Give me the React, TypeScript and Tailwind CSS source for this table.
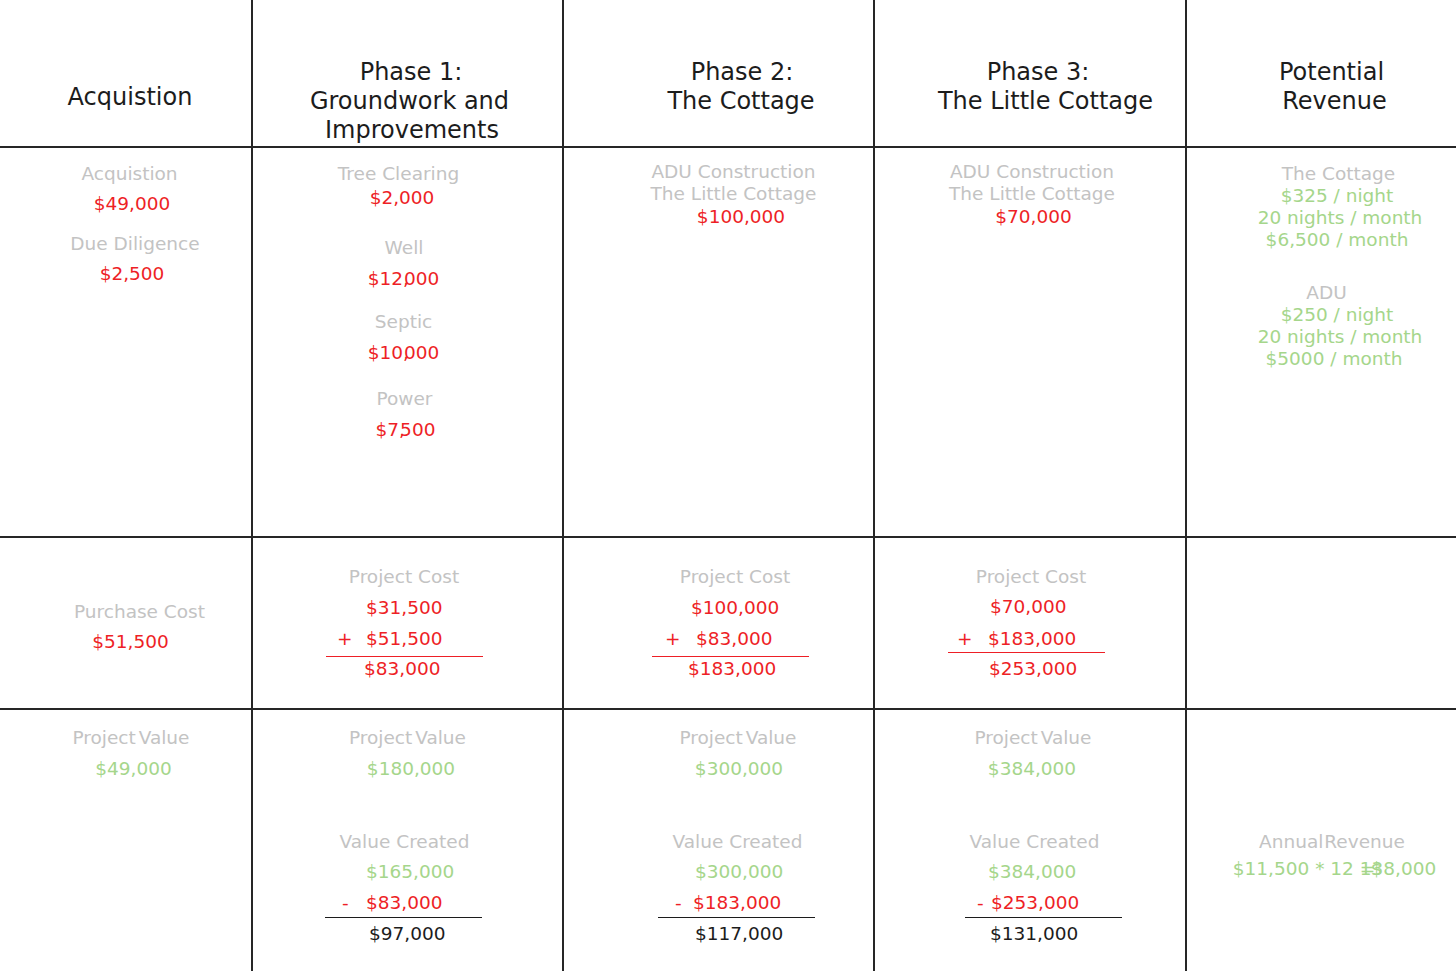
import type { ReactNode } from "react";

const gray = "text-[#c3c3c3]";
const red = "text-[#ee1f26]";
const green = "text-[#a5d68b]";
const dark = "text-[#1c1c1c]";

function T({ className = "", children }: { className?: string; children: ReactNode }) {
  return (
    <div className={`h-[22px] leading-[22px] text-center whitespace-nowrap ${className}`}>{children}</div>
  );
}

function H({ className = "", children }: { className?: string; children: ReactNode }) {
  return (
    <div className={`h-[29px] leading-[29px] text-center whitespace-nowrap ${className}`}>{children}</div>
  );
}

function Row({ className = "", children }: { className?: string; children: ReactNode }) {
  return (
    <div className={`grid grid-cols-[253px_311px_311px_312px_1fr] border-b-2 border-[#262626] ${className}`}>
      {children}
    </div>
  );
}

const cell = "border-r-2 border-[#262626] flex flex-col";

export default function App() {
  return (
    <div className="w-[1456px] h-[971px] overflow-hidden bg-white font-['DejaVu_Sans',sans-serif] text-[18.5px]">
      {/* header */}
      <Row className={`h-[148px] text-[24px] ${dark}`}>
        <div className={`${cell} pt-[83px]`}>
          <H className="pl-[9px]">Acquistion</H>
        </div>
        <div className={`${cell} pt-[58px]`}>
          <H className="pl-[7px]">Phase 1:</H>
          <H className="pl-[4px]">Groundwork and</H>
          <H className="pl-[9px]">Improvements</H>
        </div>
        <div className={`${cell} pt-[58px]`}>
          <H className="pl-[47px]">Phase 2:</H>
          <H className="pl-[45px]">The Cottage</H>
        </div>
        <div className={`${cell} pt-[58px]`}>
          <H className="pl-[16px]">Phase 3:</H>
          <H className="pl-[31px]">The Little Cottage</H>
        </div>
        <div className="flex flex-col pt-[58px]">
          <H className="pl-[20px]">Potential</H>
          <H className="pl-[26px]">Revenue</H>
        </div>
      </Row>

      {/* costs */}
      <Row className="h-[390px]">
        <div className={`${cell} pt-[15px]`}>
          <T className={`${gray} pl-[8px]`}>Acquistion</T>
          <T className={`${red} mt-[8px] pl-[13px]`}>$49,000</T>
          <T className={`${gray} mt-[18px] pl-[19px]`}>Due Diligence</T>
          <T className={`${red} mt-[8px] pl-[13px]`}>$2,500</T>
        </div>
        <div className={`${cell} pt-[15px]`}>
          <T className={`${gray} pr-[18px]`}>Tree Clearing</T>
          <T className={`${red} mt-[2px] pr-[11px]`}>$2,000</T>
          <T className={`${gray} mt-[28px] pr-[7px]`}>Well</T>
          <T className={`${red} mt-[9px] pr-[8px]`}>
            $12<span className="inline-block w-[1px]">,</span>000
          </T>
          <T className={`${gray} mt-[21px] pr-[8px]`}>Septic</T>
          <T className={`${red} mt-[9px] pr-[8px]`}>
            $10<span className="inline-block w-[1px]">,</span>000
          </T>
          <T className={`${gray} mt-[24px] pr-[6px]`}>Power</T>
          <T className={`${red} mt-[9px] pr-[4px]`}>
            $7<span className="inline-block w-[1px]">,</span>500
          </T>
        </div>
        <div className={`${cell} pt-[13px]`}>
          <T className={`${gray} pl-[30px]`}>ADU Construction</T>
          <T className={`${gray} pl-[30px]`}>The Little Cottage</T>
          <T className={`${red} mt-[1px] pl-[45px]`}>$100,000</T>
        </div>
        <div className={`${cell} pt-[13px]`}>
          <T className={`${gray} pl-[4px]`}>ADU Construction</T>
          <T className={`${gray} pl-[4px]`}>The Little Cottage</T>
          <T className={`${red} mt-[1px] pl-[7px]`}>$70,000</T>
        </div>
        <div className="flex flex-col pt-[15px]">
          <T className={`${gray} pl-[34px]`}>The Cottage</T>
          <T className={`${green} pl-[31px]`}>$325 / night</T>
          <T className={`${green} pl-[37px]`}>20 nights / month</T>
          <T className={`${green} pl-[31px]`}>$6,500 / month</T>
          <T className={`${gray} mt-[31px] pl-[10px]`}>ADU</T>
          <T className={`${green} pl-[31px]`}>$250 / night</T>
          <T className={`${green} pl-[37px]`}>20 nights / month</T>
          <T className={`${green} pl-[25px]`}>$5000 / month</T>
        </div>
      </Row>

      {/* project cost */}
      <Row className="h-[172px]">
        <div className={`${cell} pt-[63px]`}>
          <T className={`${gray} pl-[28px]`}>Purchase Cost</T>
          <T className={`${red} mt-[8px] pl-[10px]`}>$51,500</T>
        </div>
        <div className={`${cell} pt-[28px]`}>
          <T className={`${gray} pr-[7px]`}>Project Cost</T>
          <div className={`ml-[73px] w-[157px] mt-[9px] ${red}`}>
            <div className="h-[22px] leading-[22px] pl-[40px]">$31,500</div>
            <div className="h-[22px] leading-[22px] mt-[9px] flex">
              <span className="w-[40px] pl-[11px]">+</span>
              <span>$51,500</span>
            </div>
            <div className="mt-[6px] h-px bg-[#ee1f26]" />
            <div className="h-[22px] leading-[22px] mt-[1px] pl-[38px]">$83,000</div>
          </div>
        </div>
        <div className={`${cell} pt-[28px]`}>
          <T className={`${gray} pl-[33px]`}>Project Cost</T>
          <div className={`ml-[88px] w-[157px] mt-[9px] ${red}`}>
            <div className="h-[22px] leading-[22px] pl-[39px]">$100,000</div>
            <div className="h-[22px] leading-[22px] mt-[9px] flex">
              <span className="w-[44px] pl-[13px]">+</span>
              <span>$83,000</span>
            </div>
            <div className="mt-[6px] h-px bg-[#ee1f26]" />
            <div className="h-[22px] leading-[22px] mt-[1px] pl-[36px]">$183,000</div>
          </div>
        </div>
        <div className={`${cell} pt-[28px]`}>
          <T className={`${gray} pl-[2px]`}>Project Cost</T>
          <div className={`ml-[73px] w-[157px] mt-[8px] ${red}`}>
            <div className="h-[22px] leading-[22px] pl-[42px]">$70,000</div>
            <div className="h-[22px] leading-[22px] mt-[10px] flex">
              <span className="w-[40px] pl-[9px]">+</span>
              <span>$183,000</span>
            </div>
            <div className="mt-[2px] h-px bg-[#ee1f26]" />
            <div className="h-[22px] leading-[22px] mt-[5px] pl-[41px]">$253,000</div>
          </div>
        </div>
        <div />
      </Row>

      {/* value */}
      <div className="grid grid-cols-[253px_311px_311px_312px_1fr] h-[261px]">
        <div className={`${cell} pt-[17px]`}>
          <T className={`${gray} pl-[11px] [word-spacing:-3px]`}>Project Value</T>
          <T className={`${green} mt-[9px] pl-[16px]`}>$49,000</T>
        </div>
        <div className={`${cell} pt-[17px]`}>
          <T className={`${gray} [word-spacing:-3px]`}>Project Value</T>
          <T className={`${green} mt-[9px] pl-[7px]`}>$180,000</T>
          <T className={`${gray} mt-[51px] pr-[6px]`}>Value Created</T>
          <div className="ml-[72px] w-[157px] mt-[8px]">
            <div className={`h-[22px] leading-[22px] pl-[41px] ${green}`}>$165,000</div>
            <div className={`h-[22px] leading-[22px] mt-[9px] flex ${red}`}>
              <span className="w-[41px] pl-[17px]">-</span>
              <span>$83,000</span>
            </div>
            <div className="mt-[3px] h-px bg-[#1c1c1c]" />
            <div className={`h-[22px] leading-[22px] mt-[5px] pl-[44px] ${dark}`}>$97,000</div>
          </div>
        </div>
        <div className={`${cell} pt-[17px]`}>
          <T className={`${gray} pl-[39px] [word-spacing:-3px]`}>Project Value</T>
          <T className={`${green} mt-[9px] pl-[41px]`}>$300,000</T>
          <T className={`${gray} mt-[51px] pl-[38px]`}>Value Created</T>
          <div className="ml-[94px] w-[157px] mt-[8px]">
            <div className={`h-[22px] leading-[22px] pl-[37px] ${green}`}>$300,000</div>
            <div className={`h-[22px] leading-[22px] mt-[9px] flex ${red}`}>
              <span className="w-[35px] pl-[17px]">-</span>
              <span>$183,000</span>
            </div>
            <div className="mt-[3px] h-px bg-[#1c1c1c]" />
            <div className={`h-[22px] leading-[22px] mt-[5px] pl-[37px] ${dark}`}>$117,000</div>
          </div>
        </div>
        <div className={`${cell} pt-[17px]`}>
          <T className={`${gray} pl-[6px] [word-spacing:-3px]`}>Project Value</T>
          <T className={`${green} mt-[9px] pl-[4px]`}>$384,000</T>
          <T className={`${gray} mt-[51px] pl-[9px]`}>Value Created</T>
          <div className="ml-[90px] w-[157px] mt-[8px]">
            <div className={`h-[22px] leading-[22px] pl-[23px] ${green}`}>$384,000</div>
            <div className={`h-[22px] leading-[22px] mt-[9px] flex ${red}`}>
              <span className="w-[26px] pl-[12px]">-</span>
              <span>$253,000</span>
            </div>
            <div className="mt-[3px] h-px bg-[#1c1c1c]" />
            <div className={`h-[22px] leading-[22px] mt-[5px] pl-[25px] ${dark}`}>$131,000</div>
          </div>
        </div>
        <div className="flex flex-col pt-[121px]">
          <T className={`${gray} pl-[21px] [word-spacing:-5px]`}>Annual Revenue</T>
          <T className={`${green} mt-[5px] pl-[26px]`}>
            {"$11,500 * 12 "}
            <span className="relative inline-block">
              138,000
              <span className="absolute left-0 top-0">=</span>
              <span className="absolute left-[11px] top-0">$</span>
            </span>
          </T>
        </div>
      </div>
    </div>
  );
}
